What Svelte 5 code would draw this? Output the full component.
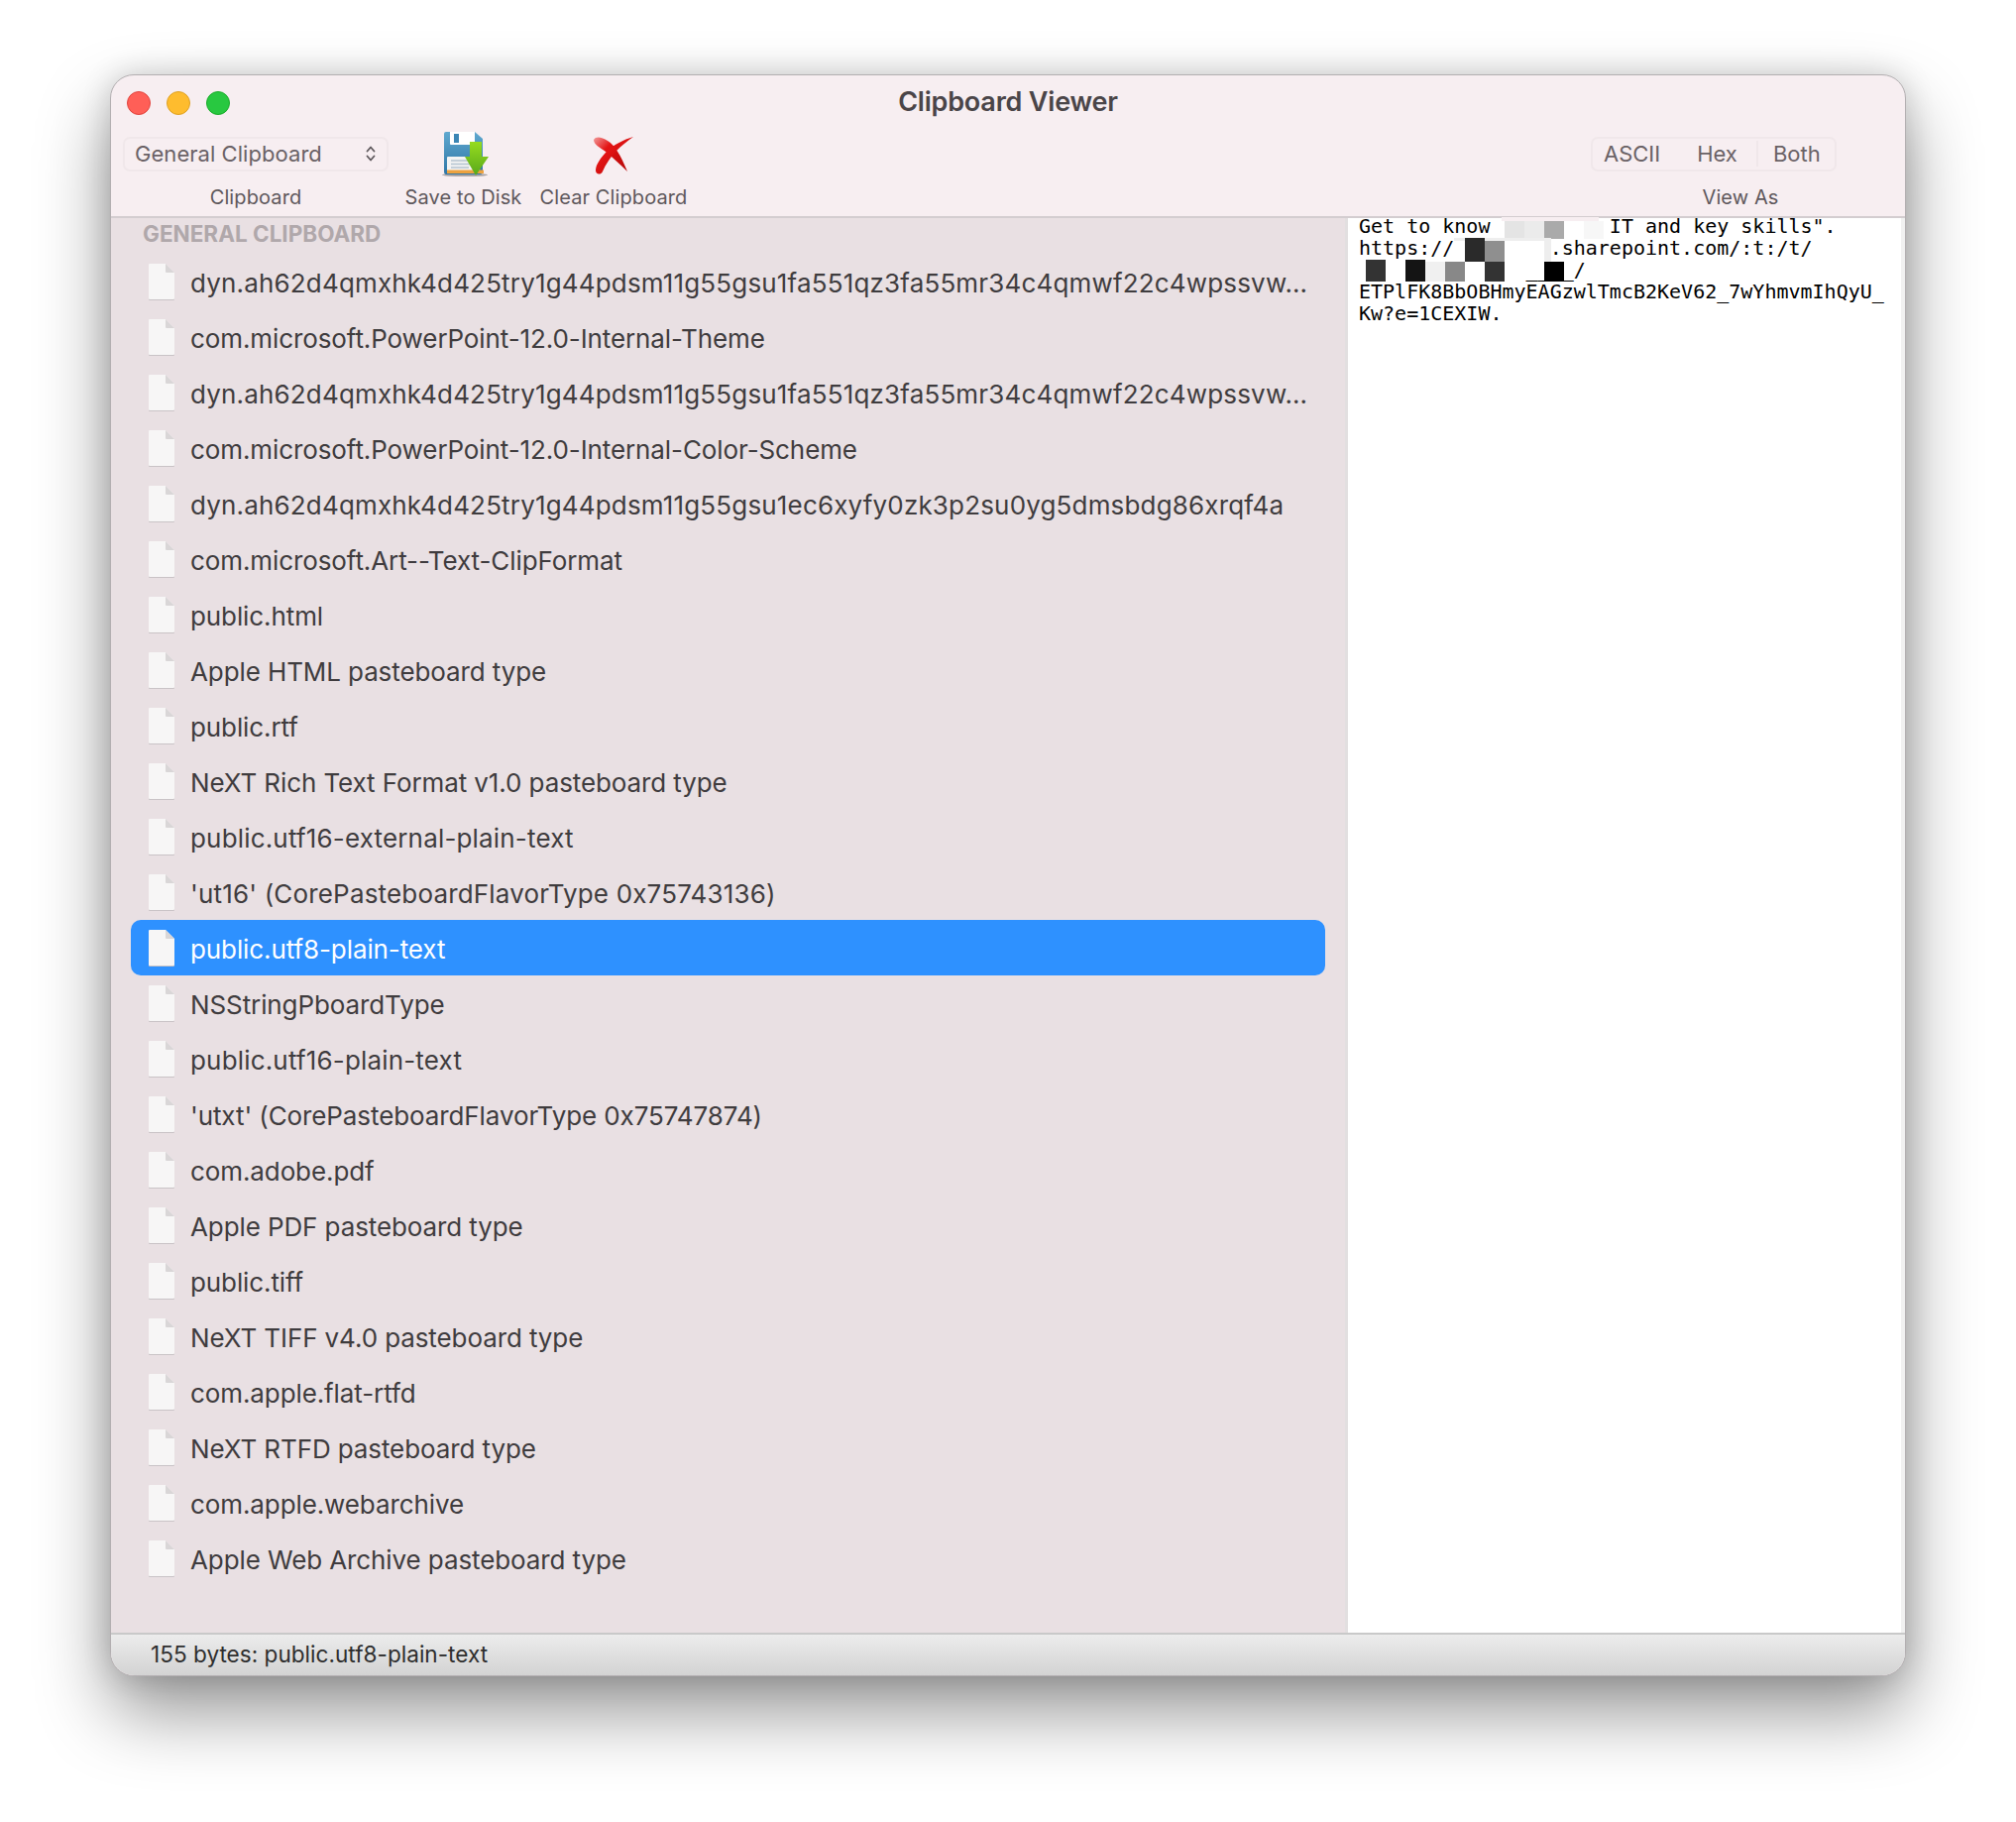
<script>
    const sharedDyn = 'dyn.ah62d4qmxhk4d425try1g44pdsm11g55gsu1fa551qz3fa55mr34c4qmwf22c4wpssvw…';

    const types = [
        sharedDyn,
        'com.microsoft.PowerPoint-12.0-Internal-Theme',
        sharedDyn,
        'com.microsoft.PowerPoint-12.0-Internal-Color-Scheme',
        'dyn.ah62d4qmxhk4d425try1g44pdsm11g55gsu1ec6xyfy0zk3p2su0yg5dmsbdg86xrqf4a',
        'com.microsoft.Art--Text-ClipFormat',
        'public.html',
        'Apple HTML pasteboard type',
        'public.rtf',
        'NeXT Rich Text Format v1.0 pasteboard type',
        'public.utf16-external-plain-text',
        "'ut16' (CorePasteboardFlavorType 0x75743136)",
        'public.utf8-plain-text',
        'NSStringPboardType',
        'public.utf16-plain-text',
        "'utxt' (CorePasteboardFlavorType 0x75747874)",
        'com.adobe.pdf',
        'Apple PDF pasteboard type',
        'public.tiff',
        'NeXT TIFF v4.0 pasteboard type',
        'com.apple.flat-rtfd',
        'NeXT RTFD pasteboard type',
        'com.apple.webarchive',
        'Apple Web Archive pasteboard type'
    ];

    const selected = 'public.utf8-plain-text';

    // names full of ones run wider in the system font
    const isWide = (name) => /^dyn|16/.test(name);

    const content = `Get to know          IT and key skills".
https://        .sharepoint.com/:t:/t/
              ____/
ETPlFK8BbOBHmyEAGzwlTmcB2KeV62_7wYhmvmIhQyU_
Kw?e=1CEXIW.`;

    // redaction blocks over the preview: [left, top, width, height, colour]
    const blocks = [
        [155, -1, 98, 4, '#f7eef1'],
        [158, 3, 20, 18, '#e4e4e4'],
        [178, 3, 20, 18, '#ebebeb'],
        [198, 3, 20, 18, '#aaaaaa'],
        [218, 3, 20, 18, '#ffffff'],
        [238, 3, 20, 18, '#f7f7f7'],
        [107, 20, 98, 3, '#eeeeee'],
        [118, 20, 20, 24, '#2a2a2a'],
        [138, 23, 20, 21, '#8f8f8f'],
        [158, 23, 40, 21, '#ffffff'],
        [198, 23, 7, 21, '#eeeeee'],
        [18, 42, 20, 22, '#333333'],
        [38, 44, 20, 20, '#ffffff'],
        [58, 42, 20, 22, '#141414'],
        [78, 44, 20, 20, '#f0f0f0'],
        [98, 44, 20, 20, '#888888'],
        [118, 44, 20, 20, '#ffffff'],
        [138, 44, 20, 20, '#333333'],
        [198, 44, 20, 20, '#000000']
    ];
</script>

<div class="window">
    <div class="titlebar">
        <div class="lights">
            <span class="light red"></span>
            <span class="light yellow"></span>
            <span class="light green"></span>
        </div>
        <div class="title">Clipboard Viewer</div>
    </div>

    <div class="toolbar">
        <div class="tool clipboard">
            <div class="slot">
                <div class="popup">
                    <span>General Clipboard</span>
                    <svg width="12" height="20" viewBox="0 0 12 20">
                        <path d="M2.5 7.5 6 3.5l3.5 4M2.5 12.5 6 16.5l3.5-4" fill="none" stroke="#5e585c" stroke-width="1.8" stroke-linecap="round" stroke-linejoin="round" />
                    </svg>
                </div>
            </div>
            <div class="label">Clipboard</div>
        </div>

        <div class="tool save">
            <div class="slot">
                <svg class="save-icon" width="70" height="60" viewBox="0 0 70 60">
                    <defs>
                        <linearGradient id="disk" x1="0" y1="0" x2="0" y2="1">
                            <stop offset="0" stop-color="#5fa8cf" />
                            <stop offset="1" stop-color="#2f76a6" />
                        </linearGradient>
                        <linearGradient id="arrow" x1="0" y1="0" x2="0" y2="1">
                            <stop offset="0" stop-color="#97dc1f" />
                            <stop offset="1" stop-color="#58a81a" />
                        </linearGradient>
                    </defs>
                    <ellipse cx="32" cy="51.5" rx="23" ry="1.6" fill="#a9a4a6" />
                    <path d="M13 8h29l8 7v33q0 3-3 3H13q-2 0-2-3V10q0-2 2-2z" fill="url(#disk)" />
                    <path d="M17 8h25v12q0 1-1 1H18q-1 0-1-1z" fill="#ffffff" />
                    <rect x="21" y="10" width="5" height="9" fill="#3b86b4" />
                    <rect x="14" y="33" width="33" height="17" rx="1" fill="#f3f3f3" />
                    <path d="M18 37h25M18 40.5h25M18 44h18" stroke="#b5c4d0" stroke-width="1.5" />
                    <rect x="14" y="46.5" width="37" height="3.5" fill="#eda23f" />
                    <path d="M37 18h12v15h7L43 52 32 33h5z" fill="url(#arrow)" />
                </svg>
            </div>
            <div class="label">Save to Disk</div>
        </div>

        <div class="tool clear">
            <div class="slot">
                <svg width="60" height="60" viewBox="0 0 60 60">
                    <defs>
                        <linearGradient id="cross" x1="0" y1="0" x2="1" y2="1">
                            <stop offset="0" stop-color="#f29a9a" />
                            <stop offset="0.35" stop-color="#e31414" />
                            <stop offset="1" stop-color="#b30808" />
                        </linearGradient>
                    </defs>
                    <path d="M10 16C12 12 18 13 24 17 31 21 37 31 44 48 36 40 28 33 22 28 17 24 10 21 10 16z" fill="url(#cross)" />
                    <path d="M50 13C40 16 30 21 24 27 17 34 12 41 12 47c0 4 5 5 7 1 3-7 8-15 14-21 5-5 11-10 17-14z" fill="url(#cross)" />
                </svg>
            </div>
            <div class="label">Clear Clipboard</div>
        </div>

        <div class="tool view">
            <div class="slot">
                <div class="segments">
                    <span class="seg ascii">ASCII</span>
                    <span class="seg hex">Hex</span>
                    <span class="seg both">Both</span>
                </div>
            </div>
            <div class="label">View As</div>
        </div>
    </div>

    <div class="panes">
        <div class="sidebar">
            <div class="heading">GENERAL CLIPBOARD</div>
            {#each types as type, index (index)}
                <div class={`row ${type === selected ? 'active' : ''} ${isWide(type) ? 'wide' : ''}`}>
                    <svg class="file" width="30" height="40" viewBox="0 0 30 40">
                        <path d="M2 3q0-1 1-1h16l9 9v26q0 1-1 1H3q-1 0-1-1z" fill="#c9c3c6" transform="translate(0 1)" />
                        <path d="M2 3q0-1 1-1h16l9 9v26q0 1-1 1H3q-1 0-1-1z" fill="#f7f6f6" />
                        <path d="M19 2l9 9h-8q-1 0-1-1z" fill="#d9d6d7" />
                    </svg>
                    <span class="name">{type}</span>
                </div>
            {/each}
        </div>

        <div class="preview">
            <pre>{content}</pre>
            {#each blocks as b}
                <span class="block" style={`left:${b[0]}px;top:${b[1]}px;width:${b[2]}px;height:${b[3]}px;background:${b[4]}`}></span>
            {/each}
        </div>
    </div>

    <div class="status">155 bytes: public.utf8-plain-text</div>
</div>

<style>
    :global(body) {
        background: #ffffff;
    }

    .window {
        box-sizing: border-box;
        width: 1812px;
        height: 1616px;
        margin: 75px 0 147px 111px;
        display: flex;
        flex-direction: column;
        border: 1px solid #b3afb1;
        border-radius: 24px;
        overflow: hidden;
        background: #f7eef1;
        font-family: Inter, "Noto Sans", sans-serif;
        box-shadow: 0 36px 72px rgba(0, 0, 0, 0.42), 0 0 30px rgba(0, 0, 0, 0.16);
    }

    .titlebar {
        flex: none;
        height: 49px;
        display: grid;
        grid-template-columns: 1fr auto 1fr;
        align-items: center;
        padding-top: 6px;
        box-sizing: border-box;
    }

    .lights {
        display: flex;
        gap: 16px;
        padding-left: 16px;
    }

    .light {
        box-sizing: border-box;
        width: 24px;
        height: 24px;
        border-radius: 50%;
        border: 1px solid;
    }

    .red { background: #ff5f57; border-color: #e0443e; }
    .yellow { background: #febc2e; border-color: #dea123; }
    .green { background: #28c840; border-color: #1aab29; }

    .title {
        margin-bottom: 3px;
        font-size: 27px;
        font-weight: 600;
        color: #4a4548;
        letter-spacing: -0.2px;
    }

    .toolbar {
        flex: none;
        display: flex;
        height: 95px;
        padding-left: 12px;
        border-bottom: 2px solid #d3cdd0;
        box-sizing: border-box;
    }

    .tool {
        display: flex;
        flex-direction: column;
        align-items: center;
    }

    .slot {
        height: 60px;
        display: flex;
        align-items: center;
        justify-content: center;
    }

    .label {
        height: 28px;
        line-height: 28px;
        font-size: 20px;
        letter-spacing: 0.1px;
        color: #5e585c;
        white-space: nowrap;
    }

    .clipboard { width: 268px; }
    .save { width: 119px; margin-left: 16px; }
    .save-icon { margin-left: 8px; }
    .clear { width: 150px; margin-left: 17px; }
    .view { width: 302px; margin-left: auto; margin-right: 15px; align-items: center; }
    .view .slot { align-self: flex-start; }

    .popup {
        box-sizing: border-box;
        width: 268px;
        height: 35px;
        display: flex;
        align-items: center;
        justify-content: space-between;
        padding: 0 10px;
        border: 2px solid #f0e7ea;
        border-radius: 7px;
        font-size: 22px;
        letter-spacing: 0.05px;
        color: #6a6266;
    }

    .segments {
        box-sizing: border-box;
        width: 248px;
        height: 35px;
        display: flex;
        align-items: center;
        border: 2px solid #f0e7ea;
        border-radius: 7px;
        font-size: 22px;
        color: #6a6266;
    }

    .seg {
        display: block;
    }

    .ascii { margin-left: 11px; }
    .hex { margin-left: 37px; }
    .both {
        margin-left: 19px;
        padding-left: 15px;
        border-left: 2px solid #f0e7ea;
    }

    .panes {
        flex: 1;
        min-height: 0;
        display: flex;
    }

    .sidebar {
        box-sizing: border-box;
        width: 1248px;
        flex: none;
        padding: 0 20px;
        background: #e9e0e3;
        border-right: 3px solid #e2dfe0;
    }

    .heading {
        height: 36px;
        line-height: 32px;
        padding-left: 12px;
        font-size: 22.5px;
        font-weight: 700;
        color: #b0a8ab;
    }

    .row {
        height: 56px;
        display: flex;
        align-items: center;
        gap: 14px;
        padding-left: 16px;
        border-radius: 10px;
        font-size: 26px;
        letter-spacing: -0.1px;
        color: #3f3c3e;
        white-space: nowrap;
    }

    .row.wide {
        letter-spacing: 0.17px;
    }

    .row.active {
        background: #2e91ff;
        color: #ffffff;
    }

    .name {
        padding-top: 2px;
    }

    .file {
        flex: none;
    }

    .preview {
        position: relative;
        flex: 1;
        background: #ffffff;
        border-right: 4px solid #f1f1f1;
    }

    pre {
        margin: -3px 0 0;
        padding-left: 11px;
        font-family: "DejaVu Sans Mono", "Liberation Mono", monospace;
        font-size: 20px;
        line-height: 22px;
        color: #000000;
    }

    .block {
        position: absolute;
        display: block;
    }

    .status {
        flex: none;
        box-sizing: border-box;
        height: 43px;
        line-height: 40px;
        padding-left: 40px;
        font-size: 22.6px;
        color: #2e2e2e;
        border-top: 2px solid #c9c9c9;
        background: linear-gradient(#ececec, #d3d3d3);
    }
</style>
